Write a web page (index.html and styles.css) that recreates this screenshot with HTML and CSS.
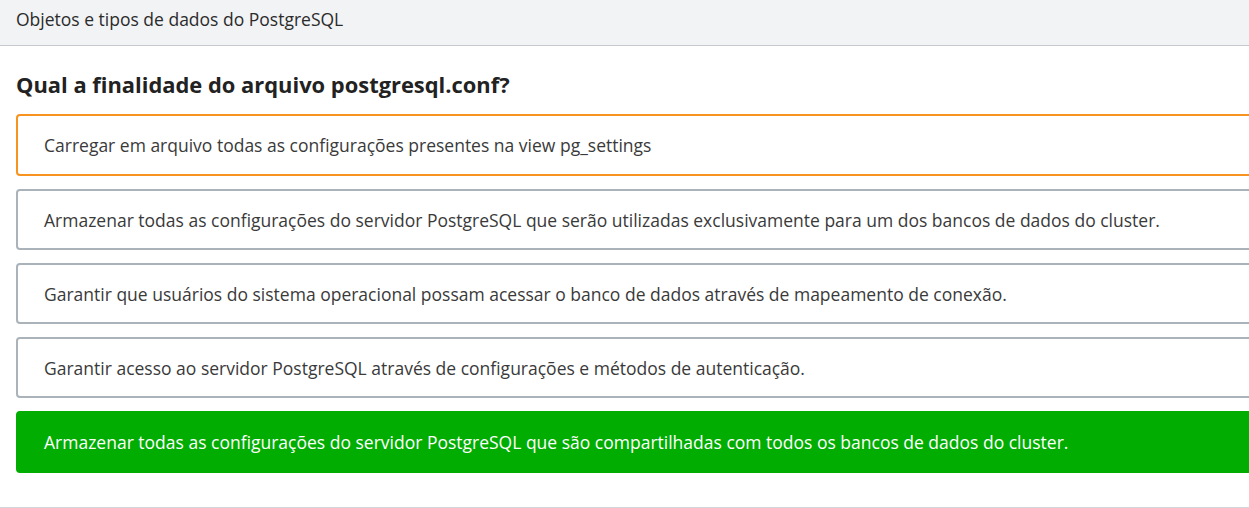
FILE: index.html
```html
<!DOCTYPE html>
<html lang="pt-BR">
<head>
<meta charset="utf-8">
<title>Objetos e tipos de dados do PostgreSQL</title>
<link rel="stylesheet" href="styles.css">
</head>
<body>
<header class="topbar">Objetos e tipos de dados do PostgreSQL</header>
<main class="quiz">
  <h1 class="question">Qual a finalidade do arquivo postgresql.conf?</h1>
  <ul class="options">
    <li class="option selected">Carregar em arquivo todas as configurações presentes na view pg_settings</li>
    <li class="option">Armazenar todas as configurações do servidor PostgreSQL que serão utilizadas exclusivamente para um dos bancos de dados do cluster.</li>
    <li class="option">Garantir que usuários do sistema operacional possam acessar o banco de dados através de mapeamento de conexão.</li>
    <li class="option">Garantir acesso ao servidor PostgreSQL através de configurações e métodos de autenticação.</li>
    <li class="option correct">Armazenar todas as configurações do servidor PostgreSQL que são compartilhadas com todos os bancos de dados do cluster.</li>
  </ul>
</main>
</body>
</html>
```
FILE: styles.css
```css
html, body {
  margin: 0;
  padding: 0;
  overflow: hidden;
  background: #fff;
  font-family: "Open Sans", "Noto Sans", sans-serif;
  color: #333;
}
.topbar {
  height: 46px;
  box-sizing: border-box;
  display: flex;
  align-items: center;
  padding: 0 16px 7px;
  background: #f2f3f5;
  border-bottom: 1px solid #c5c8cc;
  font-size: 17.5px;
  color: #2b2b2b;
}
.quiz {
  width: 1300px;
  padding: 23px 0 34px 16px;
  border-bottom: 2px solid #d3d6da;
}
.question {
  margin: 0 0 13px;
  font-size: 21.9px;
  font-weight: 700;
  line-height: 32px;
  color: #222;
}
.options {
  list-style: none;
  margin: 0;
  padding: 0;
  display: flex;
  flex-direction: column;
  gap: 13px;
}
.option {
  box-sizing: border-box;
  height: 61px;
  display: flex;
  align-items: center;
  padding: 0 26px;
  border: 2px solid #aab2ba;
  border-radius: 4px;
  font-size: 17.5px;
  color: #3a3a3a;
}
.option.selected {
  border-color: #f7931e;
  height: 62px;
}
.option.correct {
  background: #00ad00;
  border-color: #00ad00;
  color: #fff;
  height: 62px;
}
```
